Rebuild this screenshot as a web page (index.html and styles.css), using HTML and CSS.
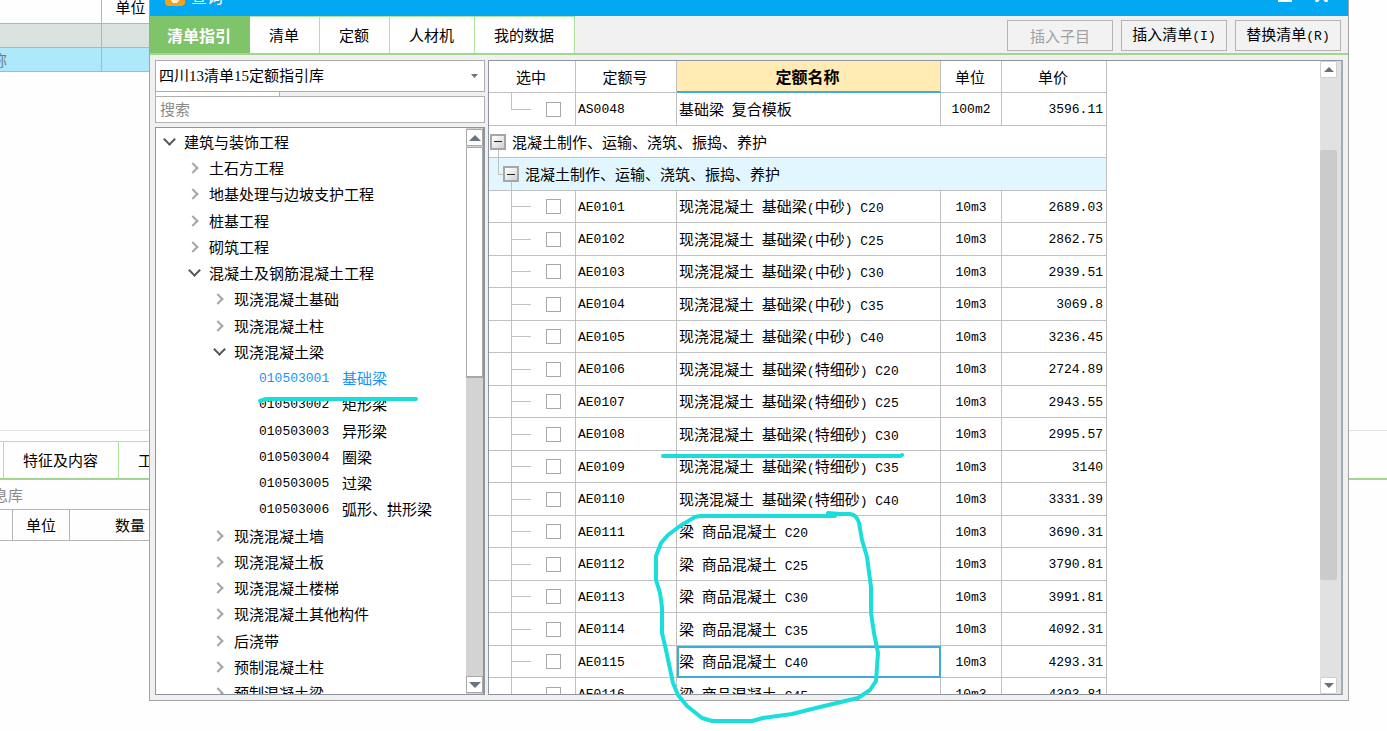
FILE: index.html
```html
<!DOCTYPE html>
<html lang="zh-CN">
<head>
<meta charset="utf-8">
<title>查询</title>
<link rel="stylesheet" href="styles.css">
</head>
<body>
<main class="workspace">
  <section class="bill">
    <table class="bill-table">
      <tr class="bill-head"><th class="c-name"></th><th class="c-unit">单位</th></tr>
      <tr class="bill-total"><td></td><td></td></tr>
      <tr class="bill-item"><td class="cut-name">名称</td><td></td></tr>
    </table>
  </section>
  <section class="detail">
    <div class="detail-tabs">
      <button class="detail-tab edge" aria-label="上一页"></button>
      <button class="detail-tab">特征及内容</button>
      <button class="detail-tab">工程量明细</button>
    </div>
    <p class="detail-note">信息库</p>
    <table class="detail-table">
      <tr><th class="d-edge"></th><th class="d-unit">单位</th><th class="d-qty">数量</th></tr>
    </table>
  </section>
</main>

<section class="window" aria-label="查询">
  <header class="titlebar">
    <div class="title-inner">
      <svg class="app-icon" width="20" height="20" viewBox="0 0 20 20"><rect width="20" height="20" rx="4" fill="#f9a01b"/><path d="M4 12l4 5h4l5-6-3-4-5 6-2-2z" fill="#fff3dc"/></svg>
      <span class="title">查询</span>
      <svg class="win-controls" width="52" height="12" viewBox="0 0 52 12"><path d="M0 9h14v3H0z" fill="#fff"/><path d="M38 12L48 0M49 12L39 0" stroke="#fff" stroke-width="3" fill="none"/></svg>
    </div>
  </header>
  <nav class="toolbar">
    <div class="tabs">
      <button class="tab active">清单指引</button>
      <button class="tab">清单</button>
      <button class="tab">定额</button>
      <button class="tab">人材机</button>
      <button class="tab">我的数据</button>
    </div>
    <div class="actions">
      <button class="action" disabled>插入子目</button>
      <button class="action">插入清单<span class="m">(I)</span></button>
      <button class="action">替换清单<span class="m">(R)</span></button>
    </div>
  </nav>
  <div class="content">
    <aside class="side">
      <select class="library" aria-label="指引库"><option>四川13清单15定额指引库</option></select>
      <div class="splitter"></div>
      <input class="search" type="text" placeholder="搜索" aria-label="搜索">
      <div class="tree-box">
        <ul class="tree">
          <li class="open"><i class="chev"></i>建筑与装饰工程</li>
          <li class="l1"><i class="chev"></i>土石方工程</li>
          <li class="l1"><i class="chev"></i>地基处理与边坡支护工程</li>
          <li class="l1"><i class="chev"></i>桩基工程</li>
          <li class="l1"><i class="chev"></i>砌筑工程</li>
          <li class="l1 open"><i class="chev"></i>混凝土及钢筋混凝土工程</li>
          <li class="l2"><i class="chev"></i>现浇混凝土基础</li>
          <li class="l2"><i class="chev"></i>现浇混凝土柱</li>
          <li class="l2 open"><i class="chev"></i>现浇混凝土梁</li>
          <li class="leaf selected"><span class="m code">010503001</span>基础梁</li>
          <li class="leaf"><span class="m code">010503002</span>矩形梁</li>
          <li class="leaf"><span class="m code">010503003</span>异形梁</li>
          <li class="leaf"><span class="m code">010503004</span>圈梁</li>
          <li class="leaf"><span class="m code">010503005</span>过梁</li>
          <li class="leaf"><span class="m code">010503006</span>弧形、拱形梁</li>
          <li class="l2"><i class="chev"></i>现浇混凝土墙</li>
          <li class="l2"><i class="chev"></i>现浇混凝土板</li>
          <li class="l2"><i class="chev"></i>现浇混凝土楼梯</li>
          <li class="l2"><i class="chev"></i>现浇混凝土其他构件</li>
          <li class="l2"><i class="chev"></i>后浇带</li>
          <li class="l2"><i class="chev"></i>预制混凝土柱</li>
          <li class="l2"><i class="chev"></i>预制混凝土梁</li>
        </ul>
        <div class="scroll tree-scroll">
          <button class="arrow" aria-label="向上"><svg width="12" height="6" viewBox="0 0 12 6"><path d="M0 6L6 0l6 6z" fill="#6b7286"/></svg></button>
          <div class="thumb"></div>
          <button class="arrow last" aria-label="向下"><svg width="12" height="6" viewBox="0 0 12 6"><path d="M0 0h12L6 6z" fill="#6b7286"/></svg></button>
        </div>
      </div>
    </aside>
    <section class="grid-box">
      <div class="grid-view">
        <table class="grid">
          <colgroup><col class="w-pick"><col class="w-code"><col class="w-name"><col class="w-unit"><col class="w-price"></colgroup>
          <thead><tr><th>选中</th><th>定额号</th><th class="sorted">定额名称</th><th>单位</th><th>单价</th></tr></thead>
          <tbody>
            <tr><td class="pick end"><input type="checkbox" aria-label="AS0048"></td><td class="m">AS0048</td><td>基础梁<span class="m"> </span>复合模板</td><td class="m unit">100m2</td><td class="m price">3596.11</td></tr>
            <tr class="group"><td colspan="5"><div class="g1"><button class="fold" aria-label="折叠"></button>混凝土制作、运输、浇筑、振捣、养护</div></td></tr>
            <tr class="group sub"><td colspan="5"><div class="g2"><button class="fold" aria-label="折叠"></button>混凝土制作、运输、浇筑、振捣、养护</div></td></tr>
            <tr><td class="pick"><input type="checkbox" aria-label="AE0101"></td><td class="m">AE0101</td><td>现浇混凝土<span class="m"> </span>基础梁<span class="m">(</span>中砂<span class="m">) C20</span></td><td class="m unit">10m3</td><td class="m price">2689.03</td></tr>
            <tr><td class="pick"><input type="checkbox" aria-label="AE0102"></td><td class="m">AE0102</td><td>现浇混凝土<span class="m"> </span>基础梁<span class="m">(</span>中砂<span class="m">) C25</span></td><td class="m unit">10m3</td><td class="m price">2862.75</td></tr>
            <tr><td class="pick"><input type="checkbox" aria-label="AE0103"></td><td class="m">AE0103</td><td>现浇混凝土<span class="m"> </span>基础梁<span class="m">(</span>中砂<span class="m">) C30</span></td><td class="m unit">10m3</td><td class="m price">2939.51</td></tr>
            <tr><td class="pick"><input type="checkbox" aria-label="AE0104"></td><td class="m">AE0104</td><td>现浇混凝土<span class="m"> </span>基础梁<span class="m">(</span>中砂<span class="m">) C35</span></td><td class="m unit">10m3</td><td class="m price">3069.8</td></tr>
            <tr><td class="pick"><input type="checkbox" aria-label="AE0105"></td><td class="m">AE0105</td><td>现浇混凝土<span class="m"> </span>基础梁<span class="m">(</span>中砂<span class="m">) C40</span></td><td class="m unit">10m3</td><td class="m price">3236.45</td></tr>
            <tr><td class="pick"><input type="checkbox" aria-label="AE0106"></td><td class="m">AE0106</td><td>现浇混凝土<span class="m"> </span>基础梁<span class="m">(</span>特细砂<span class="m">) C20</span></td><td class="m unit">10m3</td><td class="m price">2724.89</td></tr>
            <tr><td class="pick"><input type="checkbox" aria-label="AE0107"></td><td class="m">AE0107</td><td>现浇混凝土<span class="m"> </span>基础梁<span class="m">(</span>特细砂<span class="m">) C25</span></td><td class="m unit">10m3</td><td class="m price">2943.55</td></tr>
            <tr><td class="pick"><input type="checkbox" aria-label="AE0108"></td><td class="m">AE0108</td><td>现浇混凝土<span class="m"> </span>基础梁<span class="m">(</span>特细砂<span class="m">) C30</span></td><td class="m unit">10m3</td><td class="m price">2995.57</td></tr>
            <tr><td class="pick"><input type="checkbox" aria-label="AE0109"></td><td class="m">AE0109</td><td>现浇混凝土<span class="m"> </span>基础梁<span class="m">(</span>特细砂<span class="m">) C35</span></td><td class="m unit">10m3</td><td class="m price">3140</td></tr>
            <tr><td class="pick"><input type="checkbox" aria-label="AE0110"></td><td class="m">AE0110</td><td>现浇混凝土<span class="m"> </span>基础梁<span class="m">(</span>特细砂<span class="m">) C40</span></td><td class="m unit">10m3</td><td class="m price">3331.39</td></tr>
            <tr><td class="pick"><input type="checkbox" aria-label="AE0111"></td><td class="m">AE0111</td><td>梁<span class="m"> </span>商品混凝土<span class="m"> C20</span></td><td class="m unit">10m3</td><td class="m price">3690.31</td></tr>
            <tr><td class="pick"><input type="checkbox" aria-label="AE0112"></td><td class="m">AE0112</td><td>梁<span class="m"> </span>商品混凝土<span class="m"> C25</span></td><td class="m unit">10m3</td><td class="m price">3790.81</td></tr>
            <tr><td class="pick"><input type="checkbox" aria-label="AE0113"></td><td class="m">AE0113</td><td>梁<span class="m"> </span>商品混凝土<span class="m"> C30</span></td><td class="m unit">10m3</td><td class="m price">3991.81</td></tr>
            <tr><td class="pick"><input type="checkbox" aria-label="AE0114"></td><td class="m">AE0114</td><td>梁<span class="m"> </span>商品混凝土<span class="m"> C35</span></td><td class="m unit">10m3</td><td class="m price">4092.31</td></tr>
            <tr><td class="pick"><input type="checkbox" aria-label="AE0115"></td><td class="m">AE0115</td><td class="current">梁<span class="m"> </span>商品混凝土<span class="m"> C40</span></td><td class="m unit">10m3</td><td class="m price">4293.31</td></tr>
            <tr><td class="pick"><input type="checkbox" aria-label="AE0116"></td><td class="m">AE0116</td><td>梁<span class="m"> </span>商品混凝土<span class="m"> C45</span></td><td class="m unit">10m3</td><td class="m price">4393.81</td></tr>
          </tbody>
        </table>
      </div>
      <div class="scroll grid-scroll">
        <button class="arrow" aria-label="向上"><svg width="10" height="5" viewBox="0 0 10 5"><path d="M0 5l5-5 5 5z" fill="#6f6f7a"/></svg></button>
        <div class="thumb"></div>
        <button class="arrow last" aria-label="向下"><svg width="10" height="5" viewBox="0 0 10 5"><path d="M0 0h10L5 5z" fill="#6f6f7a"/></svg></button>
      </div>
    </section>
  </div>
</section>

<svg class="ink" width="1387" height="731" viewBox="0 0 1387 731" aria-hidden="true">
  <path d="M260 401L266 399H416"/>
  <path d="M663 456H900L902 455"/>
  <path d="M835 516H700L695 517 680 526 668 535 661 543 656 556V580L660 593 662 607V633L666 650 673 683 678 695 687 706 702 718 712 721H752L763 718 792 714 820 707 858 698 870 690 876 681 878 653 874 633 871 613V587L867 557 862 540 859 523Q857 515 850 514H840L828 513"/>
</svg>
</body>
</html>
```

FILE: styles.css
```css
* { box-sizing: border-box; }

html, body { height: 100%; }

body {
  margin: 0;
  position: relative;
  overflow: hidden;
  background: #fefefe;
  color: #000;
  font: 15px/20px "Noto Sans CJK SC", sans-serif;
}

button, input, select { font: inherit; color: inherit; margin: 0; border-radius: 0; }
button { padding: 0; border: 0; background: none; white-space: nowrap; }
table { border-collapse: separate; border-spacing: 0; table-layout: fixed; }
th { font-weight: 400; }
th, td { padding: 0; white-space: nowrap; }

.m {
  font-family: "Liberation Mono", "Noto Sans CJK SC", monospace;
  font-size: 13px;
  white-space: pre;
}

/* main document behind the dialog */
.bill { height: 431px; border-bottom: 1px solid #e2e2e2; }
.bill-table { width: 160px; }
.bill-table th, .bill-table td {
  height: 24px;
  border-right: 1px solid #b4b4b4;
  border-bottom: 1px solid #b4b4b4;
}
.c-name { width: 102px; }
.bill-table .bill-head th { height: 24px; padding-bottom: 10px; line-height: 13px; }
.bill-total td { background: #dae3df; }
.bill-item td { background: #ade8fb; }
.bill-table .cut-name { color: #6d7f86; text-indent: -23px; line-height: 20px; }

.detail-tabs {
  display: flex;
  height: 39px;
  margin-top: 10px;
  border-bottom: 2px solid #a3d691;
}
.detail-tab {
  padding: 0 20px 0 19px;
  border-top: 1px solid #ade69b;
  border-right: 1px solid #ade69b;
}
.detail-tab.edge { width: 4px; padding: 0; }
.detail-note { margin: 0; height: 29px; line-height: 30px; color: #8a8a8a; text-indent: -22px; }
.detail-table { width: 223px; }
.detail-table th {
  height: 32px;
  border: 1px solid #b4b4b4;
  border-left: 0;
}
.d-edge { width: 13px; }
.d-unit { width: 57px; }
.d-qty { padding-right: 32px; }

/* dialog */
.window {
  position: absolute;
  inset: 0 38px 30px 149px;
  display: flex;
  flex-direction: column;
  border: 1px solid #a2a2a2;
  border-top: 0;
  background: #f0f0f0;
}

.titlebar {
  flex: none;
  display: flex;
  align-items: flex-end;
  height: 16px;
  overflow: hidden;
  background: #02a9f2;
  color: #fff;
}
.title-inner { flex: 1; display: flex; align-items: center; height: 40px; padding: 0 18px 0 15px; }
.title { margin-left: 6px; font-size: 16px; }
.win-controls { margin-left: auto; }

.toolbar {
  flex: none;
  display: flex;
  justify-content: space-between;
  height: 39px;
  border-bottom: 2px solid #a3d691;
}
.tabs { display: flex; }
.tab {
  padding: 0 20px 0 19px;
  border-top: 1px solid #ade69b;
  border-right: 1px solid #ade69b;
  background: #fff;
}
.tab.active {
  padding: 0 18px 0 17px;
  background: #7fc36a;
  border-color: #7fc36a;
  color: #fff;
  font-size: 16px;
  font-weight: 700;
}
.actions { display: flex; gap: 8px; padding: 4px 7px 2px 0; }
.action { width: 106px; height: 31px; border: 1px solid #b4b4b4; background: #f2f2f2; }
.action:disabled { color: #a0a0a0; }

.content { flex: 1; min-height: 0; display: flex; gap: 3px; padding: 5px; }

.side { flex: none; width: 330px; display: flex; flex-direction: column; }
.library {
  flex: none;
  appearance: none;
  height: 32px;
  padding: 0 24px 0 3px;
  border: 1px solid #acacac;
  font-family: "Liberation Serif", "Noto Sans CJK SC", serif;
  background: #fff url("data:image/svg+xml,%3Csvg xmlns='http://www.w3.org/2000/svg' width='7' height='4'%3E%3Cpath d='M0 0h7L3.500 4z' fill='%236b7286'/%3E%3C/svg%3E") no-repeat right 6px center;
}
.splitter { flex: none; width: 125px; height: 4px; border: solid #b4b4b4; border-width: 0 1px; background: #fff; }
.search { flex: none; height: 27px; padding: 0 4px 2px; border: 1px solid #b0b0b0; background: #fff; }
.search::placeholder { color: #8a8a8a; opacity: 1; }

.tree-box {
  flex: 1;
  min-height: 0;
  display: flex;
  margin-top: 4px;
  overflow: hidden;
  border: 1px solid #8f959e;
  border-right-width: 2px;
  background: #fff;
}
.tree { flex: 1; margin: 0; padding: 1px 0 0; list-style: none; overflow: hidden; }
.tree li { display: flex; align-items: center; height: 26px; padding-left: 6px; white-space: nowrap; }
.tree li:nth-child(4n) { height: 27px; }
.tree .l1 { padding-left: 31px; }
.tree .l2 { padding-left: 56px; }
.tree .leaf { padding-left: 103px; }
.tree .selected { color: #1b93f7; }
.chev { flex: none; display: flex; width: 12px; padding-left: 2px; margin-right: 10px; }
.chev::before {
  content: "";
  width: 6px;
  height: 6px;
  border: solid #a6a6a6;
  border-width: 2px 2px 0 0;
  transform: rotate(45deg);
}
.open .chev { padding-left: 3px; }
.open .chev::before { width: 7px; height: 7px; border-color: #555; transform: translateY(-3px) rotate(135deg); }
.code { width: 83px; padding-top: 2px; }

.scroll { flex: none; display: flex; flex-direction: column; }
.arrow { flex: none; display: flex; align-items: center; justify-content: center; }
.arrow.last { margin-top: auto; }

.tree-scroll { width: 17px; padding: 1px 0; background: #d3d3d3; }
.tree-scroll .arrow { height: 17px; border: 1px solid #a8a8a8; background: #fff; }
.tree-scroll .thumb { flex: none; height: 41%; margin-top: 1px; border: 1px solid #a8a8a8; border-bottom-width: 2px; background: #fff; }

.grid-box {
  flex: 1;
  min-width: 0;
  display: flex;
  border: 1px solid #8f959e;
  border-right: 2px solid #a3abb4;
  background: #fff;
}
.grid-view { flex: 1; min-width: 0; overflow: hidden; }
.grid { width: 618px; }
.w-pick { width: 87px; }
.w-code { width: 101px; }
.w-name { width: 264px; }
.w-unit { width: 61px; }
.w-price { width: 105px; }
.grid th, .grid td { border: solid #c0c0c0; border-width: 0 1px 1px 0; }
.grid th { height: 32px; padding-right: 2px; }
.grid .sorted { background: #ffebb3; border-bottom: 2px solid #3fabd6; font-weight: 700; font-size: 16px; }
.grid td { height: 32px; padding: 2px 2px 0; }
.grid tr:nth-child(odd) td { height: 33px; }
.grid .unit { text-align: center; }
.grid .price { text-align: right; padding-right: 3px; }
.grid .current { border: 2px solid #3fabd6; padding: 0; }

.grid .pick {
  padding: 0 0 0 57px;
  background:
    linear-gradient(#c0c0c0, #c0c0c0) 22px 0 / 1px 100% no-repeat,
    linear-gradient(#c0c0c0, #c0c0c0) 22px 50% / 20px 1px no-repeat;
}
.grid .pick.end {
  background:
    linear-gradient(#c0c0c0, #c0c0c0) 22px 0 / 1px 50% no-repeat,
    linear-gradient(#c0c0c0, #c0c0c0) 22px 50% / 20px 1px no-repeat;
}
.pick input { display: block; appearance: none; width: 15px; height: 15px; border: 1px solid #a8a8a8; background: #fff; }

.grid .group td { padding: 0; }
.group.sub td { background: #e2f6ff; }
.g1, .g2 { display: flex; align-items: center; height: 31px; gap: 6px; padding-left: 1px; }
.g1 { background: linear-gradient(#c0c0c0, #c0c0c0) 9px 100% / 1px 50% no-repeat; }
.g2 {
  height: 32px;
  padding-left: 14px;
  background:
    linear-gradient(#c0c0c0, #c0c0c0) 9px 0 / 1px 50% no-repeat,
    linear-gradient(#c0c0c0, #c0c0c0) 9px 50% / 5px 1px no-repeat,
    linear-gradient(#c0c0c0, #c0c0c0) 22px 100% / 1px 50% no-repeat;
}
.fold {
  width: 16px;
  height: 16px;
  border: 2px solid #a6a6a6;
  background:
    linear-gradient(#222, #222) center / 8px 1px no-repeat,
    linear-gradient(135deg, #fff, #cfd3d6);
}

.grid-scroll { width: 21px; padding-right: 4px; background: #e1e1e1; }
.grid-scroll .arrow { height: 17px; border: 1px solid #cfcfcf; border-radius: 2px; background: #fff; }
.grid-scroll .thumb { flex: none; height: 68%; margin-top: 72px; border-radius: 2px; background: #cbcbcb; }

/* freehand marks over the whole desktop */
.ink {
  position: absolute;
  top: 0;
  left: 0;
  fill: none;
  stroke: #1bdedc;
  stroke-width: 4;
  stroke-linecap: round;
  stroke-linejoin: round;
  pointer-events: none;
}
```
